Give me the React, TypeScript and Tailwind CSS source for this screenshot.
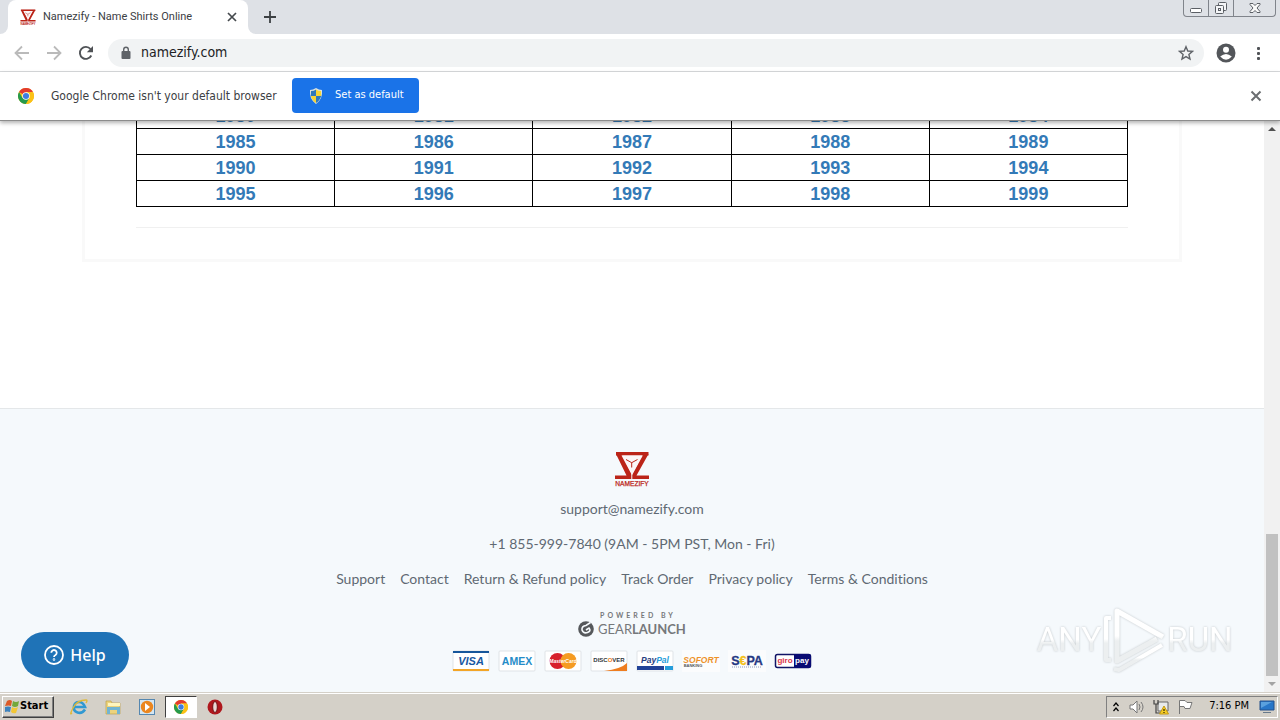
import type { ReactNode } from 'react';

const years = [
  [1980, 1981, 1982, 1983, 1984],
  [1985, 1986, 1987, 1988, 1989],
  [1990, 1991, 1992, 1993, 1994],
  [1995, 1996, 1997, 1998, 1999],
];

const footerLinks = ['Support', 'Contact', 'Return & Refund policy', 'Track Order', 'Privacy policy', 'Terms & Conditions'];

function NamezifyMark({ className }: { className: string }) {
  return (
    <svg viewBox="0 0 36 36" className={className} aria-hidden="true">
      <g fill="#bb2418">
        <path d="M2 1h32.500v3.500H2z" />
        <path d="M2 3h5.500L17.300 22v6H1v-3.500h11.500z" />
        <path d="M34.500 3H29L18.300 23v5H35v-3.500H22.500z" />
      </g>
      <path d="M7.500 4.500h21.300L18 24.300z" fill="#fbf6f7" />
      <path d="m12 8.500 5.700 3.200 5.800-3.200M17.700 11.500v5" stroke="#bb2418" strokeWidth="1" fill="none" />
      <text x="18" y="35" textAnchor="middle" fontSize="6.6" fontFamily="Liberation Sans, sans-serif" fill="#bb2418" stroke="#bb2418" strokeWidth=".25">NAMEZIFY</text>
    </svg>
  );
}

function ChromeLogo({ className }: { className: string }) {
  return (
    <svg viewBox="0 0 24 24" className={className} aria-hidden="true">
      <circle cx="12" cy="12" r="12" fill="#fbc116" />
      <path d="M12 12 1.6 6A12 12 0 0 1 22.4 6H12z" fill="#e33b2e" />
      <path d="M1.6 6A12 12 0 0 0 12 24l5.2-9L12 12 6.8 15z" fill="#269a4c" />
      <path d="M12 6h10.4A12 12 0 0 1 12 24l5.2-9z" fill="#fbc116" />
      <circle cx="12" cy="12" r="5.600" fill="#fff" />
      <circle cx="12" cy="12" r="4.600" fill="#3f7de0" />
    </svg>
  );
}

function TabStrip() {
  return (
    <header className="flex h-[34px] shrink-0 items-start bg-[#dee1e6]">
      <div className="flex h-full w-2 items-end bg-white"><div className="h-full w-full rounded-br-lg bg-[#dee1e6]" /></div>
      <div className="flex h-full w-60 items-center rounded-t-lg bg-white pr-2.5 pl-3">
        <NamezifyMark className="mr-[7px] size-4" />
        <span className="flex-1 font-[Roboto,sans-serif] text-[11px] whitespace-nowrap text-[#3c4043]">Namezify - Name Shirts Online</span>
        <button aria-label="Close tab" className="grid size-3 place-items-center">
          <svg viewBox="0 0 12 12" className="size-3"><path d="m2 2 8 8M10 2l-8 8" stroke="#45494d" strokeWidth="1.7" /></svg>
        </button>
      </div>
      <div className="h-full w-2 bg-white"><div className="h-full w-full rounded-bl-lg bg-[#dee1e6]" /></div>
      <button aria-label="New tab" className="grid h-full w-7 place-items-center">
        <svg viewBox="0 0 12 12" className="size-3"><path d="M6 0v12M0 6h12" stroke="#3c4043" strokeWidth="1.8" /></svg>
      </button>
      <div className="mr-1 ml-auto flex h-[17px] rounded-b border border-t-0 border-[#80848b]">
        <button aria-label="Minimize" className="grid w-6 place-items-center">
          <svg viewBox="0 0 14 14" className="size-3.5"><rect x="1.5" y="7.5" width="11" height="4" rx="1" fill="#fff" stroke="#5b5f65" /></svg>
        </button>
        <button aria-label="Restore" className="grid w-[26px] place-items-center border-x border-[#80848b]">
          <svg viewBox="0 0 14 14" className="size-3.5" fill="#f4f5f7" stroke="#5b5f65"><rect x="4.500" y="1.500" width="8" height="8" rx="1" /><rect x="1.500" y="4.500" width="8" height="8" rx="1" /><rect x="4.500" y="7.500" width="2" height="2" /></svg>
        </button>
        <button aria-label="Close" className="grid w-[41px] place-items-center">
          <svg viewBox="0 0 14 12" className="h-3 w-3.5"><path d="M2 1.500h3l2 2 2-2h3v1L9 6l3 3.500v1H9l-2-2-2 2H2v-1L5 6 2 2.500z" fill="#fafafa" stroke="#5b5f65" /></svg>
        </button>
      </div>
    </header>
  );
}

function Toolbar() {
  return (
    <nav aria-label="Browser" className="flex h-[38px] shrink-0 items-center border-b border-[#d9dbdd] bg-white pr-2.5 pl-3.5">
      <div className="flex gap-4">
        <button aria-label="Back" className="size-4"><svg viewBox="0 0 16 16" className="size-4" fill="none" stroke="#bababa" strokeWidth="1.8"><path d="M15 8H2M8 1.500 1.500 8 8 14.500" /></svg></button>
        <button aria-label="Forward" className="size-4"><svg viewBox="0 0 16 16" className="size-4" fill="none" stroke="#bababa" strokeWidth="1.8"><path d="M1 8h13M8 1.500 14.500 8 8 14.500" /></svg></button>
        <button aria-label="Reload" className="size-4"><svg viewBox="0 0 16 16" className="size-4"><path d="M13.300 10.500A6 6 0 1 1 12.500 4" fill="none" stroke="#505357" strokeWidth="1.9" /><path d="M15 1v6.200H8.800z" fill="#505357" /></svg></button>
      </div>
      <div className="ml-3.5 flex h-7 flex-1 items-center rounded-full bg-[#f1f3f4] pr-2.5 pl-3">
        <svg viewBox="0 0 12 14" className="h-3.5 w-3" aria-hidden="true"><rect x="1.500" y="5" width="9" height="8" rx="1" fill="#5f6368" /><path d="M3.700 5.500V3.500a2.300 2.300 0 0 1 4.600 0v2" stroke="#5f6368" strokeWidth="1.400" fill="none" /></svg>
        <input aria-label="Address" defaultValue="namezify.com" className="ml-[9px] min-w-0 flex-1 bg-transparent text-[14px] text-[#202124] outline-none" />
        <button aria-label="Bookmark" className="size-4"><svg viewBox="0 0 16 16" className="size-4"><path d="m8 1.700 1.800 4.300 4.700.4-3.600 3 1.100 4.600L8 11.600 4 14l1.100-4.600-3.600-3 4.700-.4z" fill="none" stroke="#5f6368" strokeWidth="1.400" /></svg></button>
      </div>
      <button aria-label="Profile" className="ml-3 size-5"><svg viewBox="0 0 20 20" className="size-5"><circle cx="10" cy="10" r="9.500" fill="#53565a" /><circle cx="10" cy="6.800" r="3" fill="#fff" /><path d="M4.200 13.500q5.800-5 11.600 0Q10 20 4.200 13.500" fill="#fff" /></svg></button>
      <button aria-label="More" className="ml-3.5 size-5"><svg viewBox="0 0 20 20" className="size-5" fill="#505357"><rect x="7" y="4" width="3" height="3" rx="1" /><rect x="7" y="9" width="3" height="3" rx="1" /><rect x="7" y="14" width="3" height="3" rx="1" /></svg></button>
    </nav>
  );
}

function InfoBar() {
  return (
    <section className="z-10 flex h-[49px] shrink-0 items-center border-b border-[#8c8c8c] bg-white pr-[18px] pb-px pl-[18px] shadow-[0_2px_4px_#0000004d]">
      <ChromeLogo className="size-4" />
      <span className="ml-[17px] w-[228px] text-[12px] whitespace-nowrap text-[#3c4043]">Google Chrome isn't your default browser</span>
      <button className="ml-[13px] flex h-[35px] w-[127px] items-center gap-[11px] rounded bg-[#1a73e8] pl-4 text-[11px] whitespace-nowrap text-white">
        <svg viewBox="0 0 16 16" className="size-4" aria-hidden="true">
          <path d="M8 0q3 2 6 2 1 9-6 14Q1 11 2 2q3 0 6-2" fill="#dce3e0" />
          <path d="M8 1.500V8H2.800L3 3q3 0 5-1.500M8 8h5.200Q12 12.500 8 15z" fill="#2e78bc" />
          <path d="M8 1.500Q10 3 13 3l.2 5H8zM8 8v7Q4 12.500 2.800 8" fill="#f5d437" />
        </svg>
        Set as default
      </button>
      <button aria-label="Dismiss" className="ml-auto size-3"><svg viewBox="0 0 12 12" className="size-3"><path d="m1.500 1.500 9 9M10.500 1.500l-9 9" stroke="#6b6e71" strokeWidth="2" /></svg></button>
    </section>
  );
}

function Card({ children, label }: { children: ReactNode; label: string }) {
  return (
    <svg viewBox="0 0 38 22" className="h-[22px] w-[38px]" role="img" aria-label={label} fontFamily="Liberation Sans, sans-serif" fontWeight="bold" textAnchor="middle">
      {children}
    </svg>
  );
}

const frame = <rect x="1" y="1" width="36" height="20" rx="1" fill="#fff" stroke="#dfe3e7" />;

function Payments() {
  return (
    <div className="mt-[13px] flex justify-center gap-2">
      <Card label="Visa">{frame}<path d="M1 1h36v2H1z" fill="#16569b" /><path d="M1 19h36v2H1z" fill="#f3a526" /><text x="19" y="15" fontSize="11" fontStyle="italic" fill="#1a57a0">VISA</text></Card>
      <Card label="Amex">{frame}<text x="19" y="14.500" fontSize="10.500" fill="#258cc8">AMEX</text></Card>
      <Card label="MasterCard">{frame}<circle cx="13.500" cy="11" r="8" fill="#d7202b" /><circle cx="24.500" cy="11" r="8" fill="#f59b22" /><text x="19" y="13" fontSize="5" fill="#fff" fontStyle="italic">MasterCard</text></Card>
      <Card label="Discover">{frame}<path d="M37 13v8H14q17-2 23-8" fill="#ee7d20" /><text x="19" y="12" fontSize="6" fill="#30363b">DISC<tspan fill="#ee7d20">O</tspan>VER</text></Card>
      <Card label="PayPal">{frame}<path d="M1 16h27v4H1z" fill="#214398" /><path d="M29 16h8v4h-8z" fill="#259ddb" /><text x="19" y="13" fontSize="8.500" fontStyle="italic" fill="#263d80">Pay<tspan fill="#259ddb">Pal</tspan></text></Card>
      <Card label="Sofort Banking"><rect width="38" height="22" fill="#fbfcfd" /><text x="19" y="13" fontSize="8.500" fontStyle="italic" fill="#ee9229">SOFORT</text><text x="11" y="17" fontSize="4" fill="#565a62">BANKING</text></Card>
      <Card label="SEPA"><rect width="38" height="22" fill="#fbfcfd" /><text x="19" y="15" fontSize="12.500" fill="#263983" stroke="#263983" strokeWidth=".3">S<tspan fill="#f4c019" stroke="#f4c019">€</tspan>PA</text><path d="M4 17h30" stroke="#8c98bb" strokeWidth="1" strokeDasharray="1 1" /></Card>
      <Card label="giropay"><rect x="1.500" y="4.500" width="35" height="13" rx="2" fill="#fff" stroke="#101466" strokeWidth="1.500" /><path d="M20 4h15q2 0 2 2v10q0 2-2 2H20z" fill="#080b73" /><text x="11" y="13" fontSize="8" fill="#d9334b">giro</text><text x="28" y="13" fontSize="8" fill="#fff">pay</text></Card>
    </div>
  );
}

function Footer() {
  return (
    <footer className="flex h-[284px] shrink-0 flex-col items-center border-t border-[#e4e7e9] bg-[#f5f9fc] pt-[42px] font-[Lato,sans-serif] text-[14px] leading-5 text-[#5f6973] [font-variant-ligatures:none]">
      <NamezifyMark className="size-9" />
      <a href="#email" className="mt-3">support@namezify.com</a>
      <p className="mt-[15px]">+1 855-999-7840 (9AM - 5PM PST, Mon - Fri)</p>
      <nav aria-label="Footer" className="mt-[15px] flex gap-[15px] whitespace-nowrap">
        {footerLinks.map((t) => <a key={t} href="#footer">{t}</a>)}
      </nav>
      <div className="mt-5 flex flex-col items-center text-[#75787b]">
        <span className="pl-3 text-[7px] leading-3 font-bold tracking-[3px]">POWERED BY</span>
        <div className="flex items-center gap-1 text-[13px] leading-4">
          <svg viewBox="0 0 16 16" className="size-4" aria-hidden="true"><circle cx="8" cy="8" r="7.800" fill="#55585b" /><path d="M12.500 1.500 8 4.500Q3.500 5 4 9q1.500 4 5.500 2.500T11 7L8 9" fill="none" stroke="#f5f9fc" strokeWidth="1.600" /></svg>
          <span>GEAR<b>LAUNCH</b></span>
        </div>
      </div>
      <Payments />
    </footer>
  );
}

function Watermark() {
  return (
    <svg viewBox="0 0 204 68" className="pointer-events-none absolute right-7 bottom-[18px] h-[68px] w-[204px] drop-shadow-[0_0_1px_#c2c7ca]" role="img" aria-label="ANY RUN" fontFamily="Liberation Sans Narrow, Roboto, sans-serif" fontSize="33">
      <defs>
        <linearGradient id="wm" x1="0" y1="0" x2="0" y2="1">
          <stop offset=".5" stopColor="#fff" />
          <stop offset=".6" stopColor="#eceff0" />
        </linearGradient>
      </defs>
      <g fill="none" stroke="url(#wm)" strokeWidth="5" strokeLinejoin="round">
        <path d="M131 31 85 5v50l40-22" />
        <path d="M79 12h-5v42h5" strokeWidth="4" />
        <path d="m82 63 5 1 43-25" strokeWidth="4" />
      </g>
      <text x="37" y="45" textAnchor="middle" fill="url(#wm)">ANY</text>
      <text x="168" y="45" textAnchor="middle" fill="url(#wm)">RUN</text>
    </svg>
  );
}

function Page() {
  return (
    <div className="flex min-h-0 flex-1 bg-white">
      <div className="relative flex min-w-0 flex-1 flex-col justify-end overflow-hidden">
        <main className="mx-auto mb-[146px] w-full max-w-[1100px] shrink-0 border-[3px] border-[#f9f9f9] px-[51px] pb-[31px]">
          <table className="w-full table-fixed border-collapse border border-black font-['Liberation_Sans',sans-serif] text-[18px] leading-6 font-bold text-[#337ab7]">
            <tbody>
              {years.map((row) => (
                <tr key={row[0]}>
                  {row.map((y) => <td key={y} className="border border-black p-0 pt-px text-center"><a href={`#${y}`}>{y}</a></td>)}
                </tr>
              ))}
            </tbody>
          </table>
          <hr className="mt-5 border-[#f0f0f0]" />
        </main>
        <Footer />
        <button className="absolute bottom-3.5 left-[21px] flex h-[46px] w-[108px] items-center justify-center gap-1.5 rounded-full bg-[#1f73b7] font-['Noto_Sans',sans-serif] text-[16px] font-medium text-white">
          <svg viewBox="0 0 20 20" className="size-5" aria-hidden="true" fill="none" stroke="#fff" strokeWidth="1.800"><circle cx="10" cy="10" r="9" /><path d="M7.300 7.800a2.700 2.700 0 1 1 4.200 2.200Q10 10.700 10 12" /><circle cx="10" cy="14.500" r=".4" /></svg>
          Help
        </button>
        <Watermark />
      </div>
      <div className="flex w-4 shrink-0 flex-col items-center bg-[#f1f1f1]">
        <svg viewBox="0 0 16 16" className="size-4 shrink-0" aria-hidden="true"><path d="m4 10 4-4 4 4z" fill="#505050" /></svg>
        <div className="flex-1" />
        <div className="h-[142px] w-3 bg-[#c1c1c1]" />
        <svg viewBox="0 0 16 16" className="size-4 shrink-0" aria-hidden="true"><path d="m4 6 4 4 4-4z" fill="#a3a3a3" /></svg>
      </div>
    </div>
  );
}

function Taskbar() {
  return (
    <footer className="flex h-7 shrink-0 items-center border-t border-[#d4d0c8] bg-[#d4d0c8] pr-0.5 pl-0.5 text-[11px] text-black shadow-[inset_0_1px_0_#fff]">
      <button className="flex h-[22px] w-[52px] items-center border border-t-white border-r-[#404040] border-b-[#404040] border-l-white pl-px text-[11px] font-bold shadow-[inset_-1px_-1px_0_#808080]">
        <svg viewBox="0 0 16 16" className="size-4 shrink-0" aria-hidden="true"><path d="M3 2q3-2 5 0L7 7Q5 6 1 7z" fill="#dc5a27" /><path d="M9 2q3 2 6 0l-1 5q-3 2-6 0z" fill="#74a83a" /><path d="M1 8q3-1 6 0l-1 5q-3-1-5 0z" fill="#3d82bd" /><path d="M8 8q3 2 6 0l-2 6q-3 1-5-1z" fill="#f3c735" /></svg>
        Start
      </button>
      <button aria-label="Internet Explorer" className="ml-4 size-[18px]"><svg viewBox="0 0 18 18" className="size-[18px]" fill="none"><path d="M15 11.500Q12 16 7.500 14.500T4 8q1-4 5-4t6 5H5" stroke="#3199d2" strokeWidth="2.600" /><path d="M2 15Q-1 18 3 10T16 2q2 0 0 3" stroke="#e1b936" strokeWidth="1.300" /></svg></button>
      <button aria-label="Windows Explorer" className="ml-4 size-[18px]"><svg viewBox="0 0 18 18" className="size-[18px]"><path d="M2 3h5l1 2h8v11H2z" fill="#ecd37c" stroke="#bda04c" strokeWidth=".7" /><path d="M4 5h12v3H4z" fill="#fff5bd" /><path d="M3 16V9h13v7h-3v-4H6v4z" fill="#72b4d2" /></svg></button>
      <button aria-label="Media Player" className="ml-4 size-[18px]"><svg viewBox="0 0 18 18" className="size-[18px]"><rect x="1.500" y="1.500" width="15" height="15" fill="#d4e6f2" stroke="#5587b0" /><circle cx="9" cy="9" r="6.200" fill="#eb861e" /><path d="m7 5 5 4-5 4z" fill="#fff" /></svg></button>
      <button aria-label="Google Chrome" className="ml-[9px] grid h-[22px] w-8 place-items-center border border-t-[#404040] border-r-white border-b-white border-l-[#404040] bg-white"><ChromeLogo className="size-3.5" /></button>
      <button aria-label="Opera" className="ml-2.5 size-4"><svg viewBox="0 0 16 16" className="size-4"><circle cx="8" cy="8" r="7.500" fill="#af171d" /><ellipse cx="8" cy="8" rx="2.300" ry="5.500" fill="#ead8d5" stroke="#6e1014" /></svg></button>
      <div className="ml-auto flex h-[22px] items-center border border-t-[#808080] border-r-white border-b-white border-l-[#808080] pr-0.5 pl-1.5 whitespace-nowrap">
        <svg viewBox="0 0 6 10" className="h-2.5 w-1.5" aria-hidden="true" fill="none" stroke="#000" strokeWidth="1.200"><path d="m.5 4 2.500-3 2.500 3M.5 9 3 6l2.500 3" /></svg>
        <svg viewBox="0 0 16 16" className="ml-2.5 size-4" aria-hidden="true"><path d="M1 6h3l4-4v12l-4-4H1z" fill="#fff" stroke="#777" /><path d="M10 5q2 3 0 6M12 3q4 5 0 10" fill="none" stroke="#777" /></svg>
        <svg viewBox="0 0 16 16" className="ml-2 size-4" aria-hidden="true"><path d="M5 3h10v9H5z" fill="#e8eaeb" stroke="#666" /><path d="M1 1v4h4V1M3 5v9h6" fill="none" stroke="#444" strokeWidth="1.200" /><path d="m11 7 4.500 8h-9z" fill="#f6cd24" stroke="#c49914" /><path d="M11 10v2M11 13v1" stroke="#000" /></svg>
        <svg viewBox="0 0 16 16" className="ml-2 size-4" aria-hidden="true"><path d="M2.500 15V1.500H8l2 2h5l-2 6H8l-1-2H3" fill="#fff" stroke="#777" /></svg>
        <time className="ml-4">7:16 PM</time>
        <svg viewBox="0 0 16 14" className="ml-2.5 h-3.5 w-4" aria-hidden="true"><path d="M1 1h14v9H1z" fill="#2876c8" stroke="#24518b" /><path d="m2 2 11 0-11 6z" fill="#5aa0de" /><path d="M4 12h8v1H4z" fill="#67798b" /></svg>
      </div>
    </footer>
  );
}

export default function App() {
  return (
    <div className="flex h-screen flex-col overflow-hidden bg-white font-['DejaVu_Sans_Condensed','Noto_Sans',sans-serif]">
      <TabStrip />
      <Toolbar />
      <InfoBar />
      <Page />
      <Taskbar />
    </div>
  );
}
